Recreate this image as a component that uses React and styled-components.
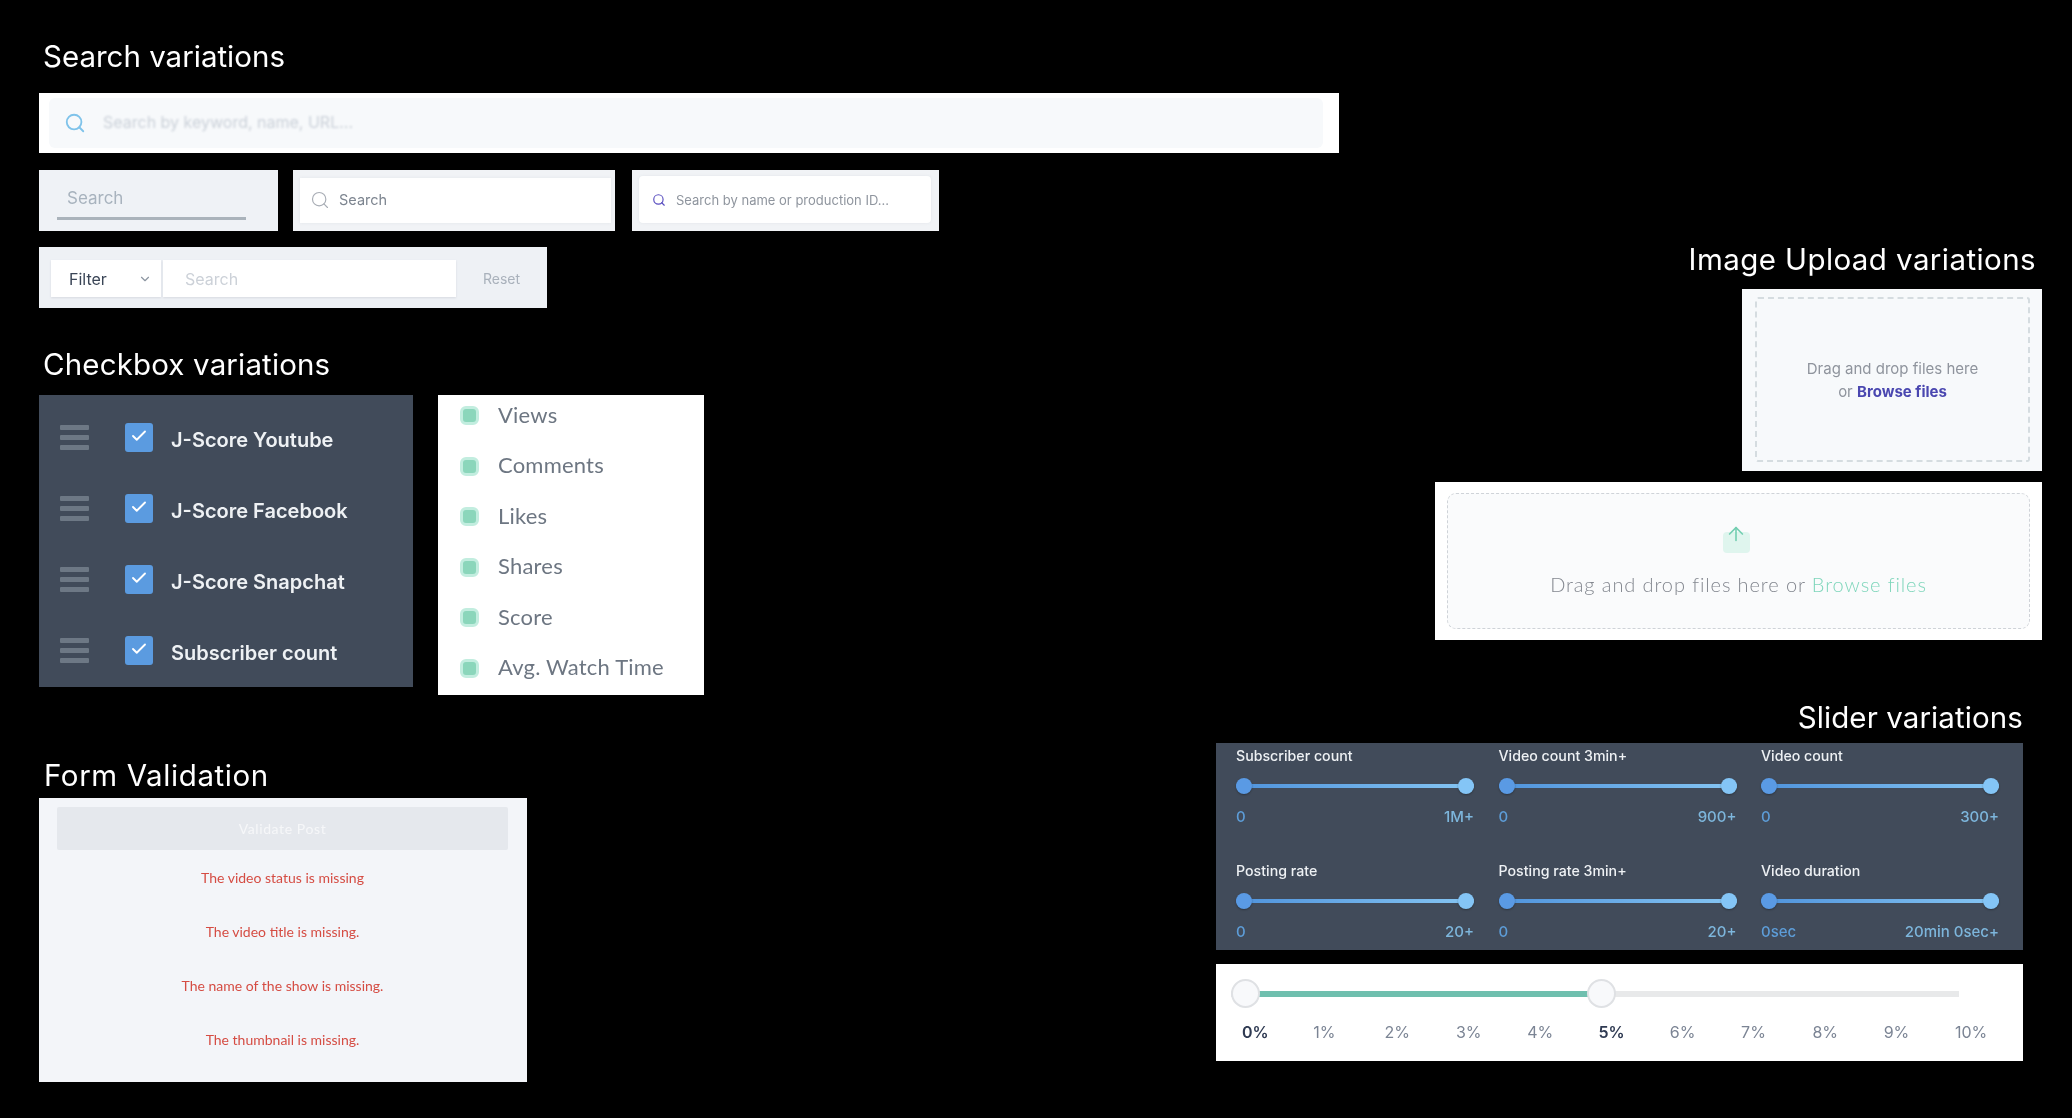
import React from 'react'
import styled, { createGlobalStyle } from 'styled-components'
import { Search, Check, ChevronDown, ArrowUp } from 'lucide-react'

const Global = createGlobalStyle`
    html, body {
        margin: 0;
        background: #000;
    }
`

const Page = styled.div`
    width: 2072px;
    height: 1118px;
    background: #000;
    overflow: hidden;
    display: flex;
    justify-content: space-between;
    font-family: 'Inter', sans-serif;
    filter: blur(0.45px);
`
const LeftColumn = styled.div`
    width: 1100px;
    flex: none;
    display: flex;
    flex-direction: column;
    align-items: flex-start;
    padding: 39px 0 0 39px;
`
const RightColumn = styled.div`
    flex: none;
    display: flex;
    flex-direction: column;
    align-items: flex-end;
    padding: 242px 30px 0 0;
`
const Title = styled.h2`
    margin: ${p => p.$margin || 0};
    font: 400 29.5px/32px 'Inter', sans-serif;
    letter-spacing: ${p => p.$spacing || 0};
    color: #fff;
    white-space: nowrap;
`

/* search */
const Row = styled.div`
    display: flex;
    flex: none;
    gap: ${p => p.$gap || '15px'};
    margin-top: ${p => p.$top || 0};
`
const SearchBar = styled.div`
    width: 1300px;
    flex: none;
    height: 60px;
    box-sizing: border-box;
    padding: 5px 16px 5px 10px;
    background: #fff;
`
const SearchBarInner = styled.div`
    height: 100%;
    display: flex;
    align-items: center;
    gap: 17px;
    padding-left: 15px;
    background: #f7f9fb;
    border-radius: 6px;
    color: #7fc3ea;
`
const BlurText = styled.span`
    margin-top: -2px;
    font-size: 16px;
    color: #cbd1d9;
    filter: blur(0.9px);
`
const UnderlineBox = styled.div`
    width: 239px;
    height: 61px;
    box-sizing: border-box;
    padding: 17px 32px 0 18px;
    background: #eff2f6;
`
const UnderlineField = styled.div`
    height: 30px;
    padding-left: 10px;
    border-bottom: 3px solid #aab3bb;
    font: 400 17px/22px 'Inter', sans-serif;
    color: #a8b3be;
`
const FieldBox = styled.div`
    width: ${p => p.$w};
    height: 61px;
    margin-left: ${p => p.$ml || 0};
    box-sizing: border-box;
    padding: ${p => p.$pad};
    background: #f1f3f6;
`
const WhiteField = styled.div`
    height: 100%;
    display: flex;
    align-items: center;
    gap: ${p => p.$gap};
    padding: ${p => p.$pad};
    box-sizing: border-box;
    background: #fff;
    border-radius: ${p => p.$radius || 0};
    color: ${p => p.$icon};
    font-size: ${p => p.$size};
    box-shadow: 0 0 3px rgba(120, 130, 145, 0.12);
`
const FieldText = styled.span`
    color: ${p => p.$color};
    white-space: nowrap;
`
const FilterBar = styled.div`
    width: 508px;
    height: 61px;
    box-sizing: border-box;
    padding: 13px 0 11px 12px;
    display: flex;
    background: #eef1f5;
`
const FilterSelect = styled.div`
    width: 110px;
    display: flex;
    align-items: center;
    justify-content: space-between;
    padding: 0 9px 0 18px;
    box-sizing: border-box;
    background: #fff;
    font-size: 16px;
    color: #3a4556;
    box-shadow: 0 1px 2px rgba(120, 130, 145, 0.2);
`
const FilterInput = styled.div`
    width: 293px;
    margin-left: 2px;
    padding-left: 22px;
    box-sizing: border-box;
    display: flex;
    align-items: center;
    background: #fff;
    font-size: 16px;
    color: #ccd1d8;
    box-shadow: 0 1px 2px rgba(120, 130, 145, 0.2);
`
const ResetLabel = styled.span`
    margin-left: 27px;
    align-self: center;
    font-size: 14px;
    color: #a9b1bb;
`

/* checkboxes */
const DarkList = styled.div`
    width: 374px;
    height: 292px;
    box-sizing: border-box;
    padding: 7px 0 0 21px;
    background: #414b5a;
`
const DarkRow = styled.div`
    height: 71px;
    display: flex;
    align-items: center;
`
const Handle = styled.div`
    width: 29px;
    display: flex;
    flex-direction: column;
    gap: 5px;
    margin-right: 36px;
    span {
        height: 5px;
        background: #6d7885;
        border-radius: 1px;
    }
`
const BlueCheck = styled.div`
    width: 28px;
    height: 29px;
    padding-bottom: 3px;
    box-sizing: border-box;
    display: flex;
    align-items: center;
    justify-content: center;
    background: #5b9be0;
    border-radius: 3px;
    color: #fff;
`
const DarkLabel = styled.span`
    margin: 5px 0 0 18px;
    font-size: 20px;
    font-weight: 600;
    color: #eef1f4;
`
const LightList = styled.div`
    width: 266px;
    height: 300px;
    box-sizing: border-box;
    padding-left: 22px;
    display: flex;
    flex-direction: column;
    gap: 9.5px;
    background: #fff;
`
const LightRow = styled.div`
    height: 41px;
    display: flex;
    align-items: center;
    gap: 19px;
    font: 400 22px 'Lato', sans-serif;
    letter-spacing: 0.2px;
    color: #6d7682;
`
const LightLabel = styled.span`
    margin-top: -3px;
`
const GreenCheck = styled.span`
    width: 19px;
    height: 19px;
    box-sizing: border-box;
    border: 3px solid #c2eddf;
    border-radius: 6px;
    background: #8bd6bb;
`

/* form validation */
const FormPanel = styled.div`
    width: 488px;
    height: 284px;
    box-sizing: border-box;
    padding: 9px 19px 0 18px;
    background: #f3f5f9;
`
const ValidateButton = styled.div`
    height: 43px;
    display: flex;
    align-items: center;
    justify-content: center;
    background: #e5e8ed;
    border-radius: 2px;
    font: 400 14px 'Lato', sans-serif;
    letter-spacing: 0.6px;
    color: #f6f7f9;
`
const ErrorText = styled.div`
    height: 54px;
    margin-top: ${p => (p.$first ? '0' : 0)};
    display: flex;
    align-items: center;
    justify-content: center;
    font: 400 14px 'Lato', sans-serif;
    color: #d54c43;
`

/* upload */
const UploadSmall = styled.div`
    width: 300px;
    height: 182px;
    box-sizing: border-box;
    padding: 8px 12px 9px 13px;
    background: #f7f9fb;
`
const UploadSmallDrop = styled.div`
    height: 100%;
    display: flex;
    flex-direction: column;
    align-items: center;
    justify-content: center;
    box-sizing: border-box;
    border: 2px dashed #d5dce0;
    border-radius: 3px;
    font-size: 15px;
    line-height: 23px;
    color: #8f949d;
`
const BrowseBold = styled.b`
    color: #4a47b0;
    font-weight: 700;
`
const UploadWide = styled.div`
    width: 607px;
    height: 158px;
    margin-top: 11px;
    box-sizing: border-box;
    padding: 11px 12px 11px 12px;
    background: #fff;
`
const UploadWideDrop = styled.div`
    height: 100%;
    box-sizing: border-box;
    display: flex;
    flex-direction: column;
    align-items: center;
    padding-top: 38px;
    border: 1px dashed #cfd3d8;
    border-radius: 9px;
    background: #fafbfc;
    font: 300 20px 'Lato', sans-serif;
    letter-spacing: 0.9px;
    color: #83878f;
`
const UploadIcon = styled.div`
    position: relative;
    width: 27px;
    height: 21px;
    margin: 0 5px 19px 0;
    background: #dff5ee;
    border-radius: 4px;
    svg {
        position: absolute;
        left: 2px;
        top: -9px;
        color: #74cfb2;
    }
`
const BrowseGreen = styled.span`
    color: #7fd6bb;
`

/* sliders */
const SliderPanel = styled.div`
    width: 807px;
    height: 207px;
    margin-right: 19px;
    box-sizing: border-box;
    padding: 3px 0 0 20px;
    display: grid;
    grid-template-columns: repeat(3, 262.5px);
    grid-auto-rows: 115px;
    background: #414b5a;
`
const SliderCell = styled.div`
    width: 238px;
`
const SliderLabel = styled.div`
    font-size: 14.2px;
    font-weight: 500;
    line-height: 20px;
    color: #eef1f4;
    margin-bottom: 12px;
    white-space: nowrap;
`
const Track = styled.div`
    position: relative;
    height: 16px;
    display: flex;
    align-items: center;
    &::before {
        content: '';
        width: 100%;
        height: 4px;
        background: linear-gradient(90deg, #4f93dc, #86c6f3);
    }
`
const Dot = styled.span`
    position: absolute;
    top: 0;
    ${p => (p.$end ? 'right: 0;' : 'left: 0;')}
    width: 16px;
    height: 16px;
    border-radius: 50%;
    background: ${p => (p.$end ? '#84c5f6' : '#5a9ae4')};
    box-shadow: 0 1px 2px rgba(0, 0, 0, 0.3);
`
const Values = styled.div`
    display: flex;
    justify-content: space-between;
    margin-top: 13px;
    font-size: 15px;
    font-weight: 500;
    line-height: 20px;
    span:first-child {
        color: #5d9dd8;
    }
    span:last-child {
        color: #7db6dc;
    }
`
const RangePanel = styled.div`
    width: 807px;
    height: 97px;
    margin: 14px 19px 0 0;
    box-sizing: border-box;
    padding: 15px 0 0 15px;
    background: #fff;
`
const Rail = styled.div`
    position: relative;
    width: 728px;
    height: 29px;
    &::before {
        content: '';
        position: absolute;
        left: 0;
        right: 0;
        top: 12px;
        height: 6px;
        background: #e8e9ea;
    }
`
const RailFill = styled.div`
    position: absolute;
    left: 14px;
    top: 12px;
    width: 356px;
    height: 6px;
    background: #6fbfae;
`
const Knob = styled.span`
    position: absolute;
    top: 0;
    left: ${p => p.$left};
    width: 29px;
    height: 29px;
    box-sizing: border-box;
    border: 2px solid #dfe1e4;
    border-radius: 50%;
    background: #f8f9fb;
`
const Ticks = styled.div`
    display: flex;
    margin: 14px 0 0 11px;
`
const Tick = styled.span`
    width: 71.3px;
    flex: none;
    font-size: 16px;
    line-height: 20px;
    font-weight: ${p => (p.$active ? 600 : 400)};
    color: ${p => (p.$active ? '#2f3a52' : '#7b8494')};
`

const darkItems = ['J-Score Youtube', 'J-Score Facebook', 'J-Score Snapchat', 'Subscriber count']
const lightItems = ['Views', 'Comments', 'Likes', 'Shares', 'Score', 'Avg. Watch Time']
const errors = [
    'The video status is missing',
    'The video title is missing.',
    'The name of the show is missing.',
    'The thumbnail is missing.',
]
const sliders = [
    ['Subscriber count', '0', '1M+'],
    ['Video count 3min+', '0', '900+'],
    ['Video count', '0', '300+'],
    ['Posting rate', '0', '20+'],
    ['Posting rate 3min+', '0', '20+'],
    ['Video duration', '0sec', '20min 0sec+'],
]
const ticks = ['0%', '1%', '2%', '3%', '4%', '5%', '6%', '7%', '8%', '9%', '10%']

const App = () => {
    return (
        <Page>
            <Global />
            <LeftColumn>
                <Title $margin="1px 0 21px 4px">Search variations</Title>
                <SearchBar>
                    <SearchBarInner>
                        <Search size={22} strokeWidth={2} />
                        <BlurText>Search by keyword, name, URL...</BlurText>
                    </SearchBarInner>
                </SearchBar>
                <Row $top="17px">
                    <UnderlineBox>
                        <UnderlineField>Search</UnderlineField>
                    </UnderlineBox>
                    <FieldBox $w="322px" $pad="8px 4px 8px 7px">
                        <WhiteField $gap="9px" $pad="0 0 2px 10px" $icon="#a8adb5" $size="14.5px">
                            <Search size={20} strokeWidth={1.4} />
                            <FieldText $color="#7d8590">Search</FieldText>
                        </WhiteField>
                    </FieldBox>
                    <FieldBox $w="307px" $ml="2px" $pad="6px 8px 8px 7px">
                        <WhiteField $gap="10px" $pad="0 0 0 13px" $icon="#5a4fc0" $size="13px" $radius="4px">
                            <Search size={14} strokeWidth={2} />
                            <FieldText $color="#8f959e">Search by name or production ID...</FieldText>
                        </WhiteField>
                    </FieldBox>
                </Row>
                <Row $top="16px">
                    <FilterBar>
                        <FilterSelect>
                            Filter
                            <ChevronDown size={14} color="#8c95a1" />
                        </FilterSelect>
                        <FilterInput>Search</FilterInput>
                        <ResetLabel>Reset</ResetLabel>
                    </FilterBar>
                </Row>

                <Title $margin="40px 0 15px 4px" $spacing="0.15px">Checkbox variations</Title>
                <Row $gap="25px">
                    <DarkList>
                        {darkItems.map(item => (
                            <DarkRow key={item}>
                                <Handle>
                                    <span />
                                    <span />
                                    <span />
                                </Handle>
                                <BlueCheck>
                                    <Check size={18} strokeWidth={2.5} />
                                </BlueCheck>
                                <DarkLabel>{item}</DarkLabel>
                            </DarkRow>
                        ))}
                    </DarkList>
                    <LightList>
                        {lightItems.map(item => (
                            <LightRow key={item}>
                                <GreenCheck />
                                <LightLabel>{item}</LightLabel>
                            </LightRow>
                        ))}
                    </LightList>
                </Row>

                <Title $margin="64px 0 7px 5px" $spacing="0.6px">Form Validation</Title>
                <FormPanel>
                    <ValidateButton>Validate Post</ValidateButton>
                    {errors.map((text, i) => (
                        <ErrorText key={text} $first={i === 0}>{text}</ErrorText>
                    ))}
                </FormPanel>
            </LeftColumn>

            <RightColumn>
                <Title $margin="1px 6px 14px 0" $spacing="0.42px">Image Upload variations</Title>
                <UploadSmall>
                    <UploadSmallDrop>
                        <span>Drag and drop files here</span>
                        <span>or <BrowseBold>Browse files</BrowseBold></span>
                    </UploadSmallDrop>
                </UploadSmall>
                <UploadWide>
                    <UploadWideDrop>
                        <UploadIcon>
                            <ArrowUp size={22} strokeWidth={1.8} />
                        </UploadIcon>
                        <span>Drag and drop files here or <BrowseGreen>Browse files</BrowseGreen></span>
                    </UploadWideDrop>
                </UploadWide>

                <Title $margin="61px 19px 10px 0" $spacing="0.1px">Slider variations</Title>
                <SliderPanel>
                    {sliders.map(([label, min, max]) => (
                        <SliderCell key={label}>
                            <SliderLabel>{label}</SliderLabel>
                            <Track>
                                <Dot />
                                <Dot $end />
                            </Track>
                            <Values>
                                <span>{min}</span>
                                <span>{max}</span>
                            </Values>
                        </SliderCell>
                    ))}
                </SliderPanel>
                <RangePanel>
                    <Rail>
                        <RailFill />
                        <Knob $left="0" />
                        <Knob $left="356px" />
                    </Rail>
                    <Ticks>
                        {ticks.map(t => (
                            <Tick key={t} $active={t === '0%' || t === '5%'}>{t}</Tick>
                        ))}
                    </Ticks>
                </RangePanel>
            </RightColumn>
        </Page>
    )
}

export default App
